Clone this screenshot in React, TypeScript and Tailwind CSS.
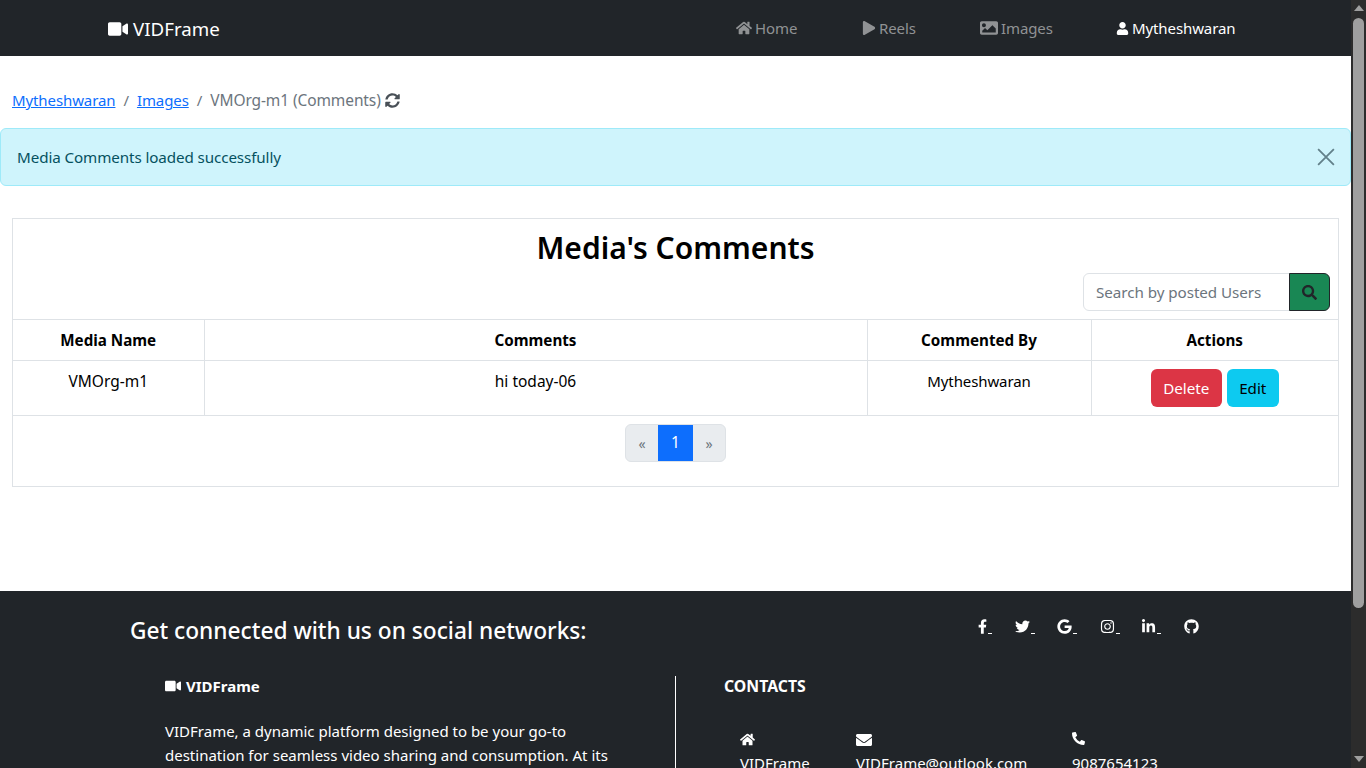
import React from "react";
import { FaVideo, FaHome, FaPlay, FaImage, FaUser, FaSyncAlt, FaSearch, FaFacebookF, FaTwitter, FaGoogle, FaInstagram, FaLinkedinIn, FaGithub, FaEnvelope, FaPhoneAlt } from "react-icons/fa";

const font = "font-['Noto_Sans','Open_Sans',sans-serif]";

function NavItem({ icon, label, active, className }: { icon: React.ReactNode; label: string; active?: boolean; className: string }) {
  return (
    <a className={`flex items-center gap-[3px] text-[15px] tracking-[-0.1px] ${active ? "text-white" : "text-[#909294]"} ${className}`}>
      {icon}
      <span>{label}</span>
    </a>
  );
}

function Social({ icon, className }: { icon: React.ReactNode; className: string }) {
  return (
    <a className={`flex h-[15px] items-end text-white ${className}`}>
      {icon}
      <span className="ml-[1px] h-px w-[4px] bg-white" />
    </a>
  );
}

function Th({ children, className }: { children: React.ReactNode; className: string }) {
  return <th className={`h-[41px] border-b border-[#dee2e6] text-center text-[15.2px] font-bold text-black ${className}`}>{children}</th>;
}

export default function App() {
  return (
    <div className={`flex h-screen w-full overflow-hidden bg-white ${font}`}>
      <div className="w-[1351px] shrink-0">
        <nav className="flex h-14 items-center bg-[#212529] pl-[108px]">
          <a className="flex w-[628px] items-center gap-[5px] pt-[2px] text-[18.7px] text-white">
            <FaVideo size={20} />
            <span>VIDFrame</span>
          </a>
          <NavItem className="w-[126px]" icon={<FaHome size={16} />} label="Home" />
          <NavItem className="w-[118px]" icon={<FaPlay size={14} />} label="Reels" />
          <NavItem className="w-[136px]" icon={<FaImage size={18} />} label="Images" />
          <NavItem className="" active icon={<FaUser size={13} />} label="Mytheshwaran" />
        </nav>

        <div className="flex h-[72px] items-start gap-[8px] px-3 pt-[32px] text-[15px] leading-6 tracking-[-0.1px] text-[#6c757d]">
          <a className="text-[#0d6efd] underline">Mytheshwaran</a>
          <span>/</span>
          <a className="text-[#0d6efd] underline">Images</a>
          <span>/</span>
          <span className="flex items-center gap-[4px] text-[15.5px]">
            VMOrg-m1 (Comments)
            <FaSyncAlt size={15} className="text-[#495057]" />
          </span>
        </div>

        <div className="flex h-[58px] items-center justify-between rounded-md border border-[#9eeaf9] bg-[#cff4fc] pl-4 pr-[15px] text-[15.2px] tracking-[-0.1px] text-[#055160]">
          <span>Media Comments loaded successfully</span>
          <svg width="18" height="18" viewBox="0 0 16 16" className="text-[#62808a]">
            <path d="M1 1 L15 15 M15 1 L1 15" stroke="currentColor" strokeWidth="1.6" fill="none" />
          </svg>
        </div>

        <div className="mx-3 mt-8 h-[269px] border border-[#dee2e6]">
          <h2 className="mt-[7px] text-center text-[30px] font-semibold leading-[44px] text-black">Media's Comments</h2>
          <div className="mt-[3px] flex justify-end pr-2">
            <div className="flex h-[38px] w-[207px] items-center rounded-l-md border border-[#dee2e6] pl-3 text-[15.2px] tracking-[-0.05px] text-[#6c757d]">Search by posted Users</div>
            <button className="-ml-px flex h-[38px] w-[41px] items-center justify-center rounded-r-md border border-[#212529] bg-[#198754] text-[#212529]">
              <FaSearch size={15} />
            </button>
          </div>
          <table className="mt-2 w-full table-fixed border-collapse border-t border-[#dee2e6]">
            <thead>
              <tr>
                <Th className="w-[191px] border-r">Media Name</Th>
                <Th className="w-[663px] border-r">Comments</Th>
                <Th className="w-[224px] border-r">Commented By</Th>
                <Th className="">Actions</Th>
              </tr>
            </thead>
            <tbody>
              <tr className="h-[55px] text-center text-[15.5px] text-black">
                <td className="border-b border-r border-[#dee2e6] pb-[12px]">VMOrg-m1</td>
                <td className="border-b border-r border-[#dee2e6] pb-[12px]">hi today-06</td>
                <td className="border-b border-r border-[#dee2e6] pb-[13px] text-[15px] tracking-[-0.1px]">Mytheshwaran</td>
                <td className="border-b border-[#dee2e6]">
                  <div className="flex justify-center gap-[5px] text-[15.2px]">
                    <button className="h-[38px] w-[71px] rounded-md bg-[#dc3545] text-white">Delete</button>
                    <button className="h-[38px] w-[52px] rounded-md bg-[#0dcaf0] text-black">Edit</button>
                  </div>
                </td>
              </tr>
            </tbody>
          </table>
          <div className="mt-2 flex justify-center text-[15.5px]">
            <div className="flex h-[38px] overflow-hidden rounded-md border border-[#dee2e6] bg-[#e9ecef]">
              <span className="flex w-[32px] items-center justify-center text-[14px] text-[#6c757d]">«</span>
              <span className="flex w-[35px] items-center justify-center bg-[#0d6efd] text-white">1</span>
              <span className="flex w-[32px] items-center justify-center text-[14px] text-[#6c757d]">»</span>
            </div>
          </div>
        </div>

        <footer className="mt-[104px] h-[300px] bg-[#212529] text-white">
          <div className="flex h-[85px] pl-[130px] pt-[23px]">
            <h5 className="w-[848px] text-[22.7px] font-medium leading-[34px]">Get connected with us on social networks:</h5>
            <div className="flex pt-[5px]">
              <Social className="w-[37px]" icon={<FaFacebookF className="h-[15px] w-[9px]" />} />
              <Social className="w-[42px]" icon={<FaTwitter size={15} />} />
              <Social className="w-[43px]" icon={<FaGoogle size={15} />} />
              <Social className="w-[41px]" icon={<FaInstagram size={15} />} />
              <Social className="w-[43px]" icon={<FaLinkedinIn size={15} />} />
              <a className="flex h-4 text-white"><FaGithub size={15} /></a>
            </div>
          </div>
          <div className="flex pl-[165px]">
            <div className="w-[510px] pr-[50px] text-[15px] leading-6">
              <div className="-mt-px flex h-[21px] items-center gap-[5px] font-bold">
                <FaVideo size={16} />
                <span className="text-[15px]">VIDFrame</span>
              </div>
              <p className="mt-[23px]">VIDFrame, a dynamic platform designed to be your go-to destination for seamless video sharing and consumption. At its</p>
            </div>
            <div className="h-[200px] border-l border-white pl-12">
              <div className="h-[21px] text-[15.8px] font-bold leading-[21px]">CONTACTS</div>
              <div className="mt-[35px] flex pl-4 text-[15px] leading-6">
                <div className="w-[116px]"><FaHome size={15} className="mb-[4px]" />VIDFrame</div>
                <div className="w-[216px]"><FaEnvelope size={16} className="mb-[3px]" />VIDFrame@outlook.com</div>
                <div><FaPhoneAlt size={13} className="mb-[6px]" />9087654123</div>
              </div>
            </div>
          </div>
        </footer>
      </div>

      <div className="flex h-screen w-[15px] shrink-0 flex-col items-center bg-[#2c2c2c]">
        <div className="mt-[5px] h-0 w-0 border-x-[5px] border-b-[6px] border-x-transparent border-b-[#9f9f9f]" />
        <div className="mt-[7px] h-[590px] w-[11px] rounded-full bg-[#9f9f9f]" />
        <div className="mt-auto mb-[6px] h-0 w-0 border-x-[5px] border-t-[6px] border-x-transparent border-t-[#9f9f9f]" />
      </div>
    </div>
  );
}
